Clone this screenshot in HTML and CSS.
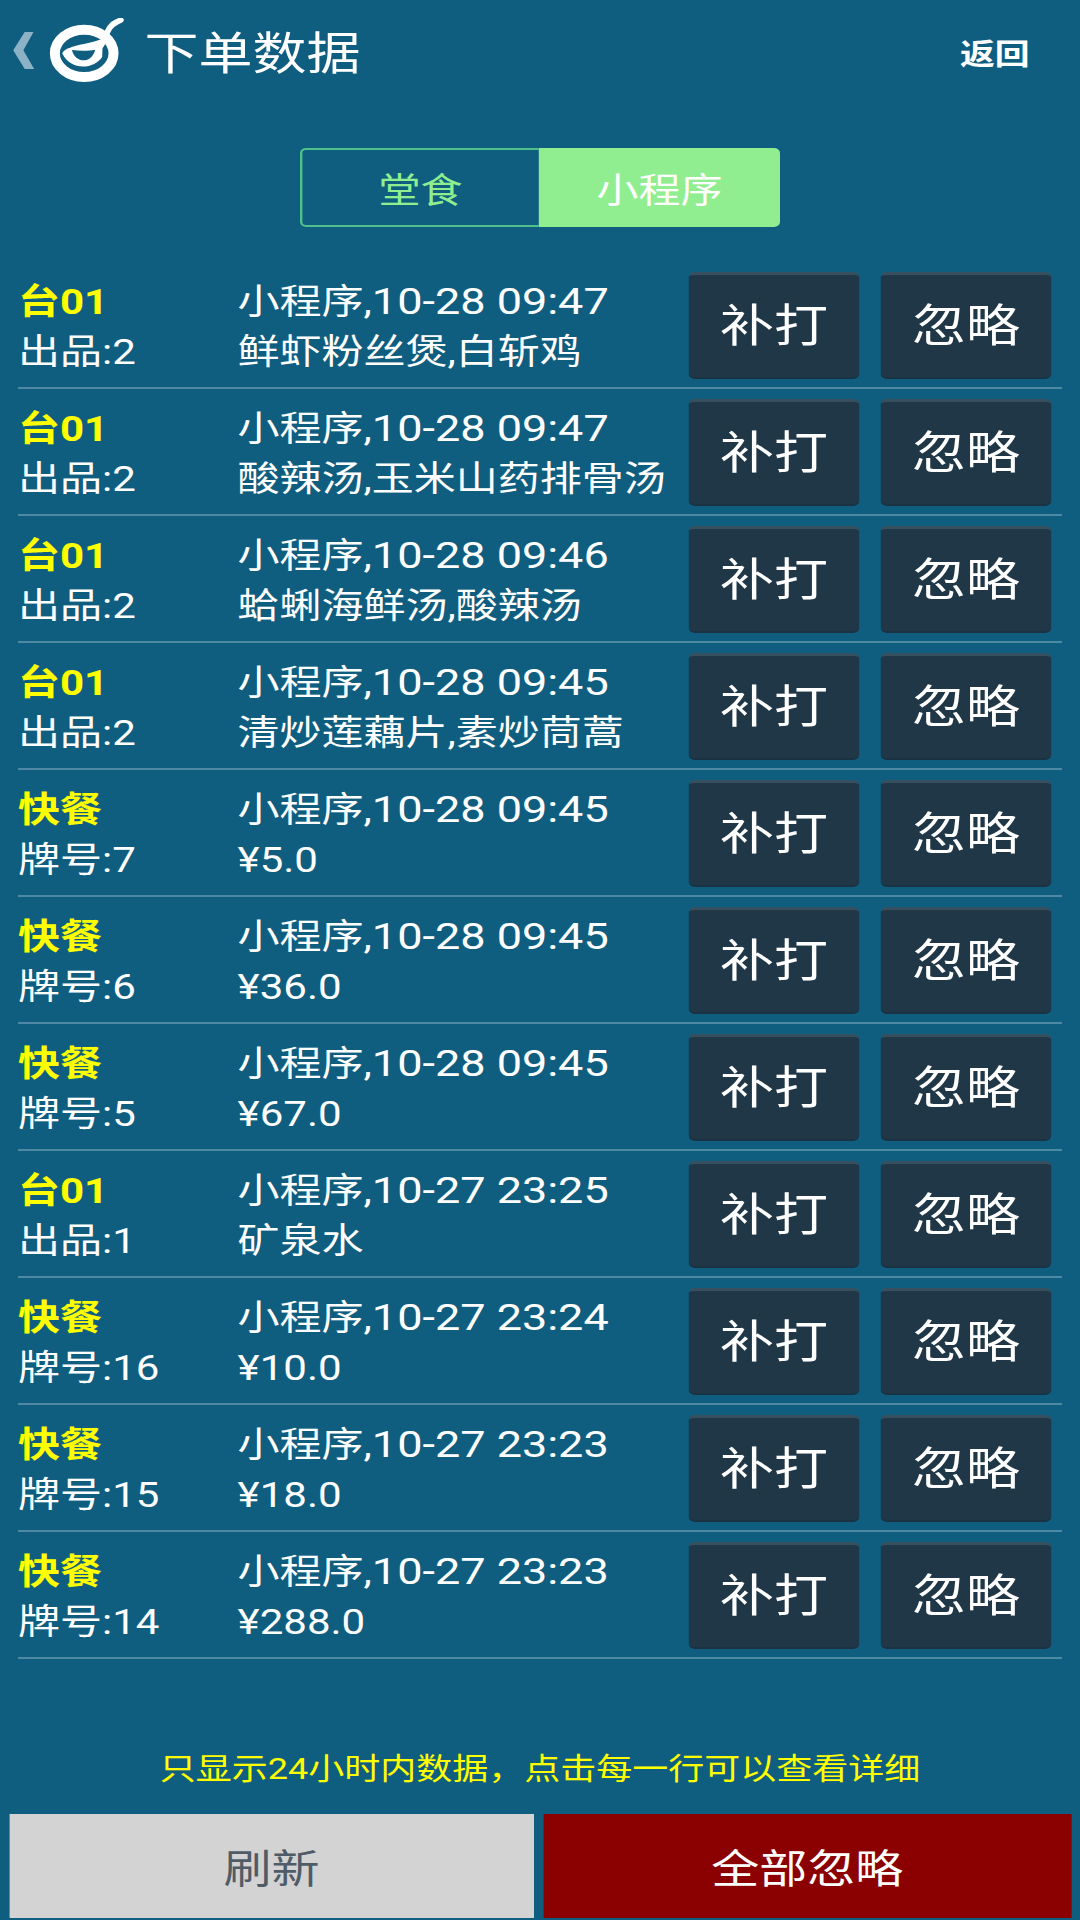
FILE: index.html
```html
<!DOCTYPE html>
<html lang="zh-CN">
<head>
<meta charset="utf-8">
<title>下单数据</title>
<link rel="stylesheet" href="styles.css">
</head>
<body>
<div class="app">
  <header class="header">
    <svg class="chevron" viewBox="38 68 62 110" preserveAspectRatio="none"><polygon points="98,68 72,68 38,122 72,178 100,178 68,122"/></svg>
    <svg class="logo" viewBox="0 0 75 64" preserveAspectRatio="none">
      <g transform="translate(-49,-8) scale(.3333)">
        <ellipse cx="252" cy="130" rx="88" ry="71" fill="none" stroke="#fff" stroke-width="30"/>
        <path fill="#fff" d="M186 130C198 106 260 104 308 86L306 140C285 176 212 186 186 130Z"/>
        <path fill="#0f5e80" d="M215 120C240 123 265 123 285 119C280 140 265 151 250 151C235 151 220 140 215 120Z"/>
        <path fill="none" stroke="#fff" stroke-width="17" stroke-linecap="round" d="M298 112C322 88 315 50 350 36L362 30"/>
      </g>
    </svg>
    <h1 class="title">下单数据</h1>
    <span class="back">返回</span>
  </header>
  <nav class="tabs">
    <div class="tab">堂食</div>
    <div class="tab active">小程序</div>
  </nav>
  <ul class="list">
    <li class="row"><div class="who"><b>台01</b><span>出品:2</span></div><div class="info"><span>小程序,<span class="stamp">10-28 09:47</span></span><span>鲜虾粉丝煲,白斩鸡</span></div><button class="btn">补打</button><button class="btn">忽略</button></li>
    <li class="row"><div class="who"><b>台01</b><span>出品:2</span></div><div class="info"><span>小程序,<span class="stamp">10-28 09:47</span></span><span>酸辣汤,玉米山药排骨汤</span></div><button class="btn">补打</button><button class="btn">忽略</button></li>
    <li class="row"><div class="who"><b>台01</b><span>出品:2</span></div><div class="info"><span>小程序,<span class="stamp">10-28 09:46</span></span><span>蛤蜊海鲜汤,酸辣汤</span></div><button class="btn">补打</button><button class="btn">忽略</button></li>
    <li class="row"><div class="who"><b>台01</b><span>出品:2</span></div><div class="info"><span>小程序,<span class="stamp">10-28 09:45</span></span><span>清炒莲藕片,素炒茼蒿</span></div><button class="btn">补打</button><button class="btn">忽略</button></li>
    <li class="row"><div class="who"><b>快餐</b><span>牌号:7</span></div><div class="info"><span>小程序,<span class="stamp">10-28 09:45</span></span><span>¥5.0</span></div><button class="btn">补打</button><button class="btn">忽略</button></li>
    <li class="row"><div class="who"><b>快餐</b><span>牌号:6</span></div><div class="info"><span>小程序,<span class="stamp">10-28 09:45</span></span><span>¥36.0</span></div><button class="btn">补打</button><button class="btn">忽略</button></li>
    <li class="row"><div class="who"><b>快餐</b><span>牌号:5</span></div><div class="info"><span>小程序,<span class="stamp">10-28 09:45</span></span><span>¥67.0</span></div><button class="btn">补打</button><button class="btn">忽略</button></li>
    <li class="row"><div class="who"><b>台01</b><span>出品:1</span></div><div class="info"><span>小程序,<span class="stamp">10-27 23:25</span></span><span>矿泉水</span></div><button class="btn">补打</button><button class="btn">忽略</button></li>
    <li class="row"><div class="who"><b>快餐</b><span>牌号:16</span></div><div class="info"><span>小程序,<span class="stamp">10-27 23:24</span></span><span>¥10.0</span></div><button class="btn">补打</button><button class="btn">忽略</button></li>
    <li class="row"><div class="who"><b>快餐</b><span>牌号:15</span></div><div class="info"><span>小程序,<span class="stamp">10-27 23:23</span></span><span>¥18.0</span></div><button class="btn">补打</button><button class="btn">忽略</button></li>
    <li class="row"><div class="who"><b>快餐</b><span>牌号:14</span></div><div class="info"><span>小程序,<span class="stamp">10-27 23:23</span></span><span>¥288.0</span></div><button class="btn">补打</button><button class="btn">忽略</button></li>
  </ul>
  <p class="hint">只显示24小时内数据，点击每一行可以查看详细</p>
  <footer class="actions">
    <button class="action refresh">刷新</button>
    <button class="action ignore-all">全部忽略</button>
  </footer>
</div>
</body>
</html>
```
FILE: styles.css
```css
* { box-sizing: border-box; }
html, body { margin: 0; padding: 0; width: 1080px; height: 1920px; overflow: hidden; background: #0f5e80; }
body { font-family: Roboto, "Noto Sans CJK SC", sans-serif; color: #fff; }

/* The reference is a horizontally stretched capture: lay out at 900 wide and widen by 1.2 */
.app {
  width: 900px;
  height: 1920px;
  display: flex;
  flex-direction: column;
  transform: scaleX(1.2);
  transform-origin: 0 0;
}

.header { height: 100px; display: flex; align-items: center; padding: 0 42px 0 11px; flex: none; }
.chevron { width: 17.5px; height: 37px; fill: #8db2c6; flex: none; }
.logo { width: 62.5px; height: 64px; margin-left: 12.5px; flex: none; }
.title { margin: 10px 0 0 17px; font-size: 45px; line-height: 60px; font-weight: 400; }
.back { margin: 4px 0 0 auto; font-size: 29px; font-weight: 700; }

.tabs { display: flex; width: 400px; height: 79px; margin: 48px 0 0 250px; flex: none; }
.tab {
  width: 199px;
  display: flex;
  align-items: center;
  justify-content: center;
  font-size: 35px;
  color: #90ee90;
  border: 2px solid #4fc08c;
  border-right: none;
  border-radius: 5px 0 0 5px;
}
.tab.active { width: 201px; background: #90ee90; color: #fff; border: none; border-radius: 0 5px 5px 0; }

.list { list-style: none; margin: 35px 15px 0; padding: 0; flex: none; }
.row {
  height: 127px;
  display: flex;
  align-items: flex-start;
  padding: 10px 9px 0 0;
  border-bottom: 2px solid #4f88a2;
}
.who, .info { display: flex; flex-direction: column; font-size: 35px; line-height: 50px; padding-top: 6px; white-space: nowrap; }
.who { width: 183px; flex: none; }
.who b { color: #ff0; font-weight: 700; }
.info { flex: 1; min-width: 0; }
.stamp { font-size: 37.5px; line-height: 1; }
.btn {
  width: 142px;
  height: 107px;
  margin-left: 18px;
  flex: none;
  font: 400 45px/1 Roboto, "Noto Sans CJK SC", sans-serif;
  color: #fff;
  background: #203747;
  border: none;
  border-top: 3px solid #37505f;
  border-bottom: 2px solid #1a3242;
  border-radius: 5px;
  padding: 0;
}
.info + .btn { margin-left: 0; }

.hint { margin: auto 0 25px; padding: 0; text-align: center; font-size: 30px; line-height: 40px; color: #ff0; flex: none; }

.actions { display: flex; gap: 8px; height: 104px; margin-bottom: 2px; padding: 0 7.5px; flex: none; }
.action { border: none; padding: 0; font: 400 40px Roboto, "Noto Sans CJK SC", sans-serif; }
.refresh { width: 437.5px; flex: none; background: #d3d3d3; color: #4f5b66; }
.ignore-all { flex: 1; background: #8b0000; color: #fff; }
```
